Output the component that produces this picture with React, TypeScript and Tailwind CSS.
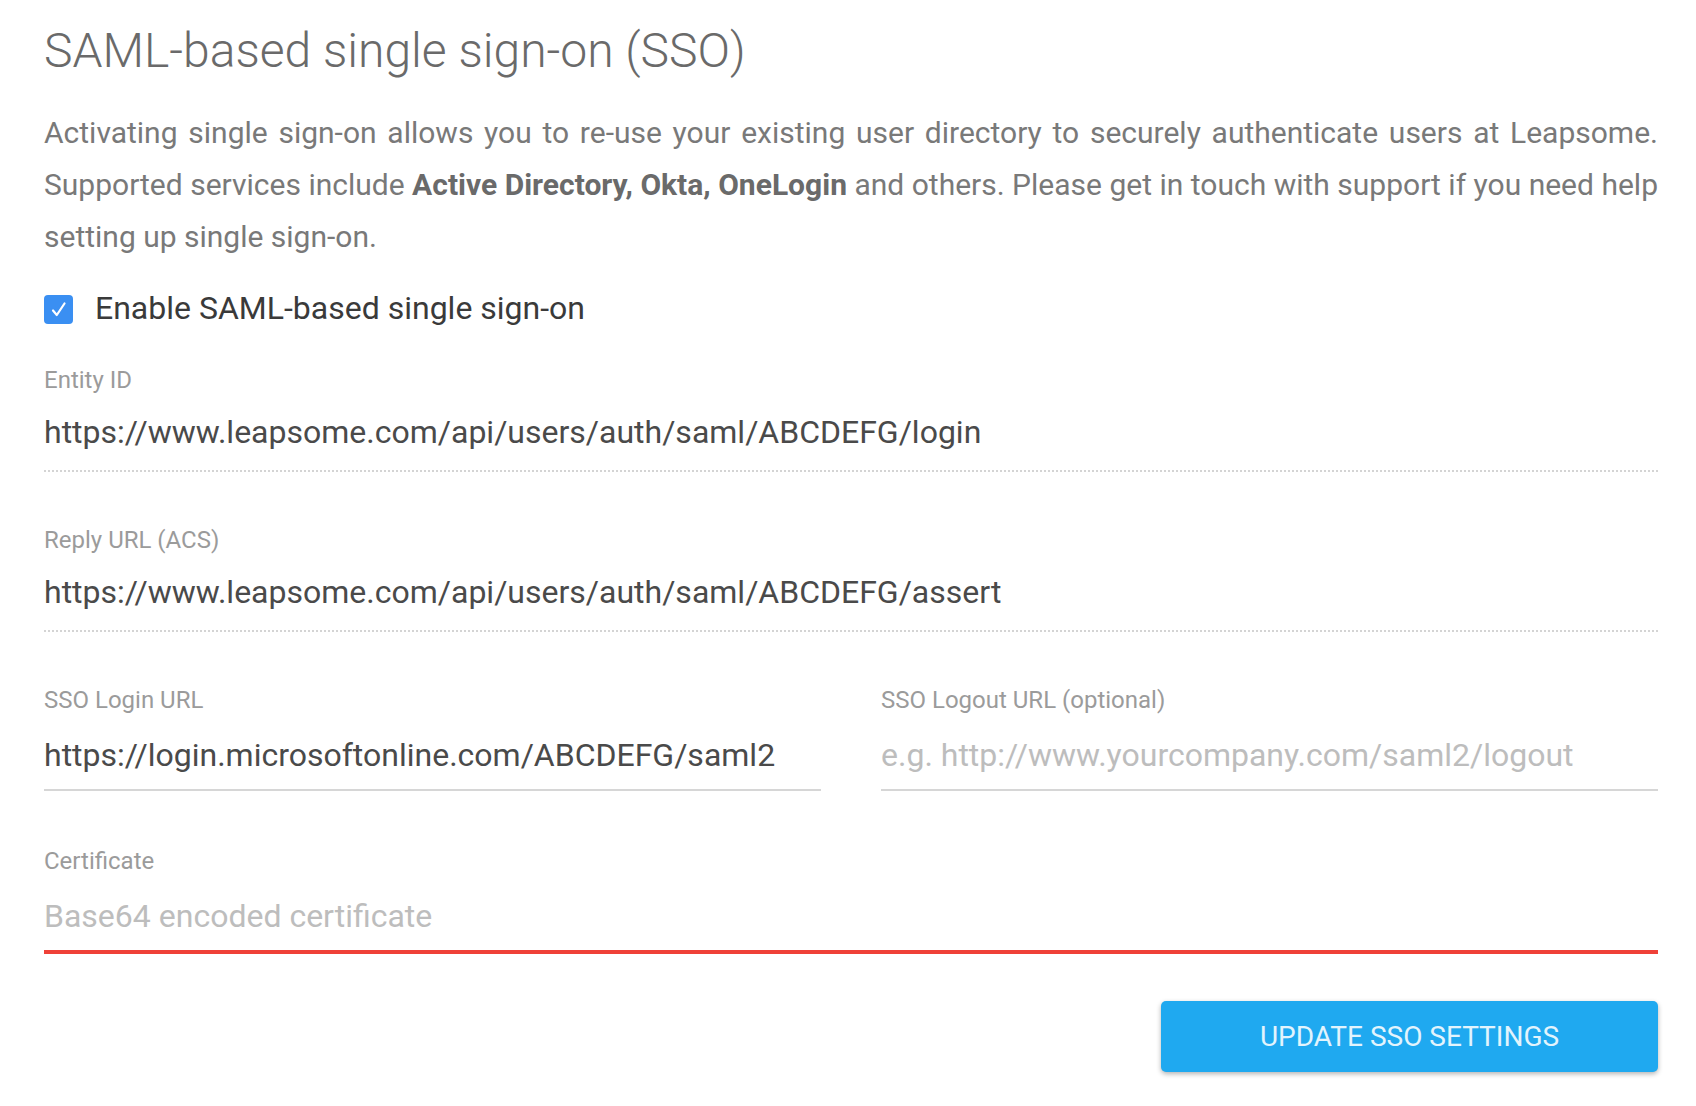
import React from 'react';

const FieldLabel: React.FC<{ children: React.ReactNode }> = ({ children }) => (
  <div className="text-[24px] leading-[28px] text-[#9b9b9b]">{children}</div>
);

const ReadOnlyField: React.FC<{ label: string; value: string; className?: string }> = ({ label, value, className = "" }) => (
  <div className={className}>
    <FieldLabel>{label}</FieldLabel>
    <div className="mt-[16px] pb-[16px] border-b-2 border-dotted border-[#d4d4d4] text-[32px] leading-[44px] text-[#4a4a4a] whitespace-nowrap">
      {value}
    </div>
  </div>
);

const InputField: React.FC<{ label: string; value?: string; placeholder?: string; error?: boolean }> = ({ label, value, placeholder, error }) => (
  <div>
    <FieldLabel>{label}</FieldLabel>
    <div
      className={`mt-[19px] text-[32px] leading-[44px] whitespace-nowrap ${
        error ? 'pb-[12px] border-b-4 border-[#ef4138]' : 'pb-[12px] border-b-2 border-[#d6d6d6]'
      } ${value ? 'text-[#4a4a4a]' : 'text-[#bdbdbd]'}`}
    >
      {value || placeholder}
    </div>
  </div>
);

export default function App() {
  return (
    <div className="min-h-screen bg-white font-[Roboto,sans-serif] pl-[44px] pr-[38px] pt-[23px] pb-10">
      <h1 className="text-[48px] leading-[56px] font-light text-[#6a6a6a]">SAML-based single sign-on (SSO)</h1>

      <p className="mt-[28px] text-[30px] leading-[52px] text-[#797979] text-justify">
        Activating single sign-on allows you to re-use your existing user directory to securely authenticate users at Leapsome.
        Supported services include <span className="font-bold text-[#6a6a6a]">Active Directory, Okta, OneLogin</span> and others.
        Please get in touch with support if you need help setting up single sign-on.
      </p>

      <label className="mt-[26px] flex items-start gap-[22px] h-[38px]">
        <span className="mt-[6px] w-[29px] h-[29px] rounded-[4px] bg-[#3a8ff2] flex items-center justify-center shrink-0">
          <svg width="29" height="29" viewBox="0 0 29 29" fill="none">
            <path d="M9 15.5l3.8 4.5L20.5 8.5" stroke="white" strokeWidth="2.2" strokeLinecap="round" strokeLinejoin="round" />
          </svg>
        </span>
        <span className="text-[32px] leading-[38px] text-[#3a3a3a]">Enable SAML-based single sign-on</span>
      </label>

      <ReadOnlyField className="mt-[39px]" label="Entity ID" value="https://www.leapsome.com/api/users/auth/saml/ABCDEFG/login" />
      <ReadOnlyField className="mt-[54px]" label="Reply URL (ACS)" value="https://www.leapsome.com/api/users/auth/saml/ABCDEFG/assert" />

      <div className="mt-[54px] grid grid-cols-2 gap-x-[60px]">
        <InputField label="SSO Login URL" value="https://login.microsoftonline.com/ABCDEFG/saml2" />
        <InputField label="SSO Logout URL (optional)" placeholder="e.g. http://www.yourcompany.com/saml2/logout" />
      </div>

      <div className="mt-[56px]">
        <InputField label="Certificate" placeholder="Base64 encoded certificate" error />
      </div>

      <div className="mt-[47px] flex justify-end">
        <button className="w-[497px] h-[71px] rounded-[5px] bg-[#1fa9f0] text-[28px] text-[#e2f4fd] uppercase shadow-[0_2px_5px_rgba(0,0,0,0.3)]">
          Update SSO Settings
        </button>
      </div>
    </div>
  );
}
